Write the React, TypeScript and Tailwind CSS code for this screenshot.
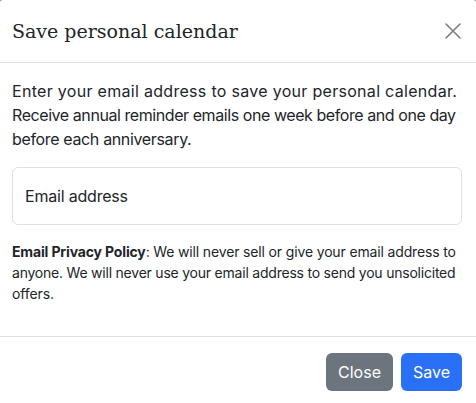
import React from "react";

export default function App() {
  return (
    <div className="w-[476px] h-[403px] overflow-hidden bg-[#9a9a9a]">
      <div
        className="bg-white rounded-t-[3px] text-[#212529] h-full"
        style={{ fontFamily: "Inter, 'Liberation Sans', sans-serif" }}
      >
        {/* Header */}
        <div className="flex items-center justify-between pl-3 pr-[14px] py-4 border-b border-[#dee2e6]">
          <h5
            className="text-[19px] leading-[30px] m-0 text-[#212529]"
            style={{ fontFamily: "'DejaVu Serif', 'Liberation Serif', serif" }}
          >
            Save personal calendar
          </h5>
          <button className="w-[16px] h-[16px] mr-[1px] flex items-center justify-center" aria-label="Close">
            <svg width="16" height="16" viewBox="0 0 16 16">
              <path d="M1 1 L15 15 M15 1 L1 15" stroke="#7d7d7d" strokeWidth="1.6" strokeLinecap="round" />
            </svg>
          </button>
        </div>

        {/* Body */}
        <div className="pl-3 pr-[14px] py-4">
          <p className="text-[16px] leading-[24px] mb-4 whitespace-nowrap">
            <span className="block tracking-[0.3px]">Enter your email address to save your personal calendar.</span>
            <span className="block tracking-[-0.43px]">Receive annual reminder emails one week before and one day</span>
            <span className="block tracking-[-0.35px]">before each anniversary.</span>
          </p>
          <div className="mb-4 h-[58px] border border-[#dee2e6] rounded-[6px] flex items-center px-3">
            <span className="text-[16px] leading-[24px] text-[#212529] tracking-[-0.2px]">Email address</span>
          </div>
          <p className="text-[14px] leading-[21px] whitespace-nowrap mb-4">
            <span className="block tracking-[-0.15px]">
              <b className="font-bold">Email Privacy Policy</b>: We will never sell or give your email address to
            </span>
            <span className="block tracking-[-0.22px]">
              anyone. We will never use your email address to send you unsolicited
            </span>
            <span className="block tracking-[-0.1px]">offers.</span>
          </p>
        </div>

        {/* Footer */}
        <div className="border-t border-[#dee2e6] pl-3 pr-[10px] py-3 flex justify-end items-center">
          <button className="m-1 h-[38px] px-3 rounded-[6px] bg-[#6c757d] text-white text-[16px] leading-[24px]">
            Close
          </button>
          <button className="m-1 h-[38px] px-3 rounded-[6px] bg-[#2a70f6] text-white text-[16px] leading-[24px]">
            Save
          </button>
        </div>
      </div>
    </div>
  );
}
